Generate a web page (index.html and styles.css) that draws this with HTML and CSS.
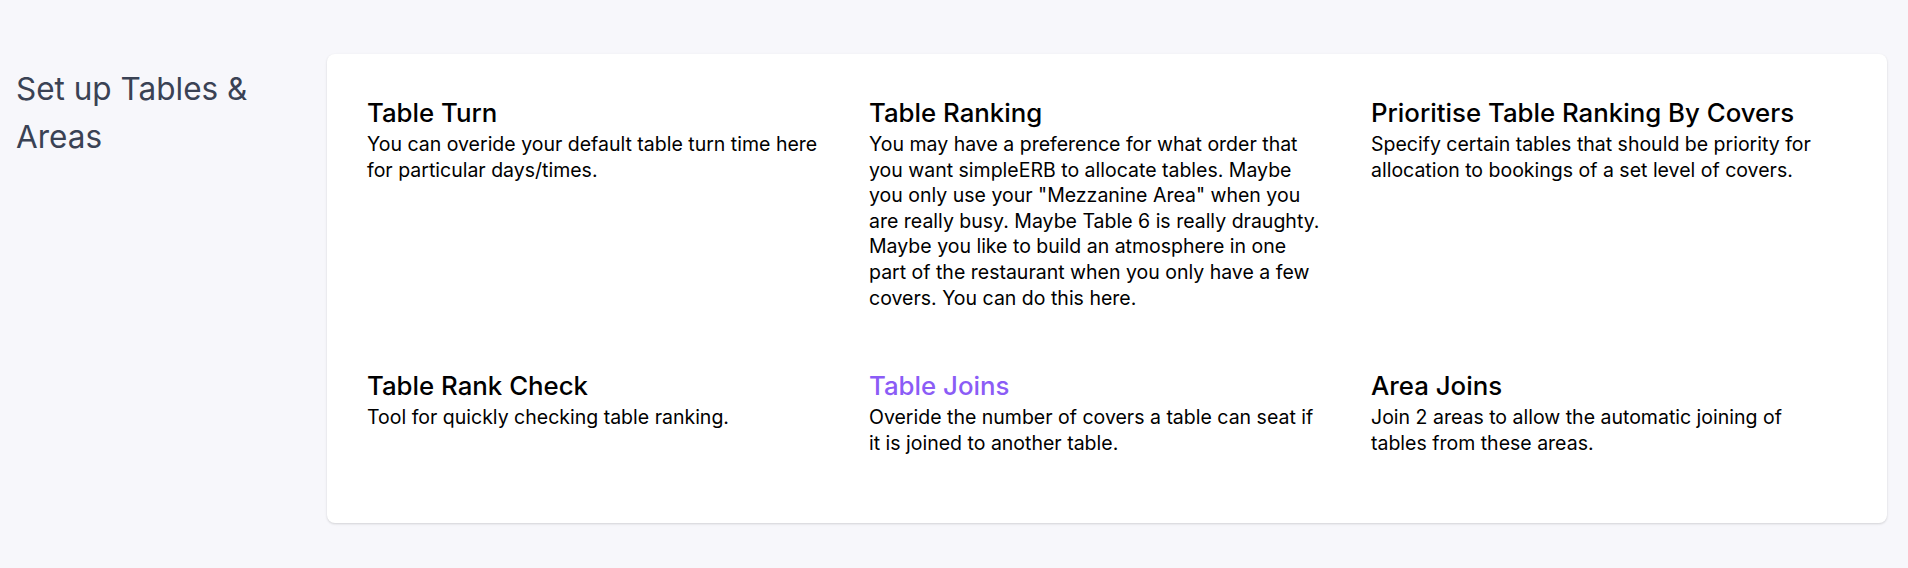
FILE: index.html
```html
<!DOCTYPE html>
<html lang="en">
<head>
<meta charset="utf-8">
<title>Set up Tables &amp; Areas</title>
<link rel="stylesheet" href="styles.css">
</head>
<body>
<div class="page">
  <aside class="side">
    <h2 class="side-title">Set up Tables &amp; Areas</h2>
  </aside>
  <section class="card">
    <div class="grid">
      <div class="item">
        <h3 class="item-title">Table Turn</h3>
        <p class="item-text">You can overide your default table turn time here for particular days/times.</p>
      </div>
      <div class="item">
        <h3 class="item-title">Table Ranking</h3>
        <p class="item-text">You may have a preference for what order that you want simpleERB to allocate tables. Maybe you only use your "Mezzanine Area" when you are really busy. Maybe Table 6 is really draughty. Maybe you like to build an atmosphere in one part of the restaurant when you only have a few covers. You can do this here.</p>
      </div>
      <div class="item">
        <h3 class="item-title">Prioritise Table Ranking By Covers</h3>
        <p class="item-text">Specify certain tables that should be priority for allocation to bookings of a set level of covers.</p>
      </div>
      <div class="item">
        <h3 class="item-title">Table Rank Check</h3>
        <p class="item-text">Tool for quickly checking table ranking.</p>
      </div>
      <div class="item">
        <h3 class="item-title active">Table Joins</h3>
        <p class="item-text">Overide the number of covers a table can seat if it is joined to another table.</p>
      </div>
      <div class="item">
        <h3 class="item-title">Area Joins</h3>
        <p class="item-text">Join 2 areas to allow the automatic joining of tables from these areas.</p>
      </div>
    </div>
  </section>
</div>
</body>
</html>
```

FILE: styles.css
```css
html, body {
  margin: 0;
  padding: 0;
}

body {
  background: #f7f7fb;
  font-family: Inter, "Noto Sans", "Liberation Sans", sans-serif;
  color: #000;
}

.page {
  display: flex;
  align-items: flex-start;
  padding: 54px 21px 46px 16px;
}

.side {
  flex: 0 0 311px;
}

.side-title {
  margin: 11px 0 0;
  font-size: 31.5px;
  line-height: 48px;
  font-weight: 400;
  color: #3a4254;
}

.card {
  flex: 1 1 auto;
  background: #fff;
  border-radius: 8px;
  box-shadow: 0 1px 3px rgba(0, 0, 0, 0.1), 0 1px 2px rgba(0, 0, 0, 0.06);
  padding: 43px 40px 67px;
}

.grid {
  display: grid;
  grid-template-columns: repeat(3, 1fr);
  column-gap: 26px;
  row-gap: 59px;
}

.item {
  max-width: 455px;
}

.item-title {
  margin: 0 0 4px;
  font-size: 25.8px;
  line-height: 31px;
  font-weight: 500;
  color: #000;
}

.item-title.active {
  color: #8b5cf6;
}

.item-text {
  margin: 0;
  font-size: 19.5px;
  line-height: 25.6px;
  color: #000;
}
```
